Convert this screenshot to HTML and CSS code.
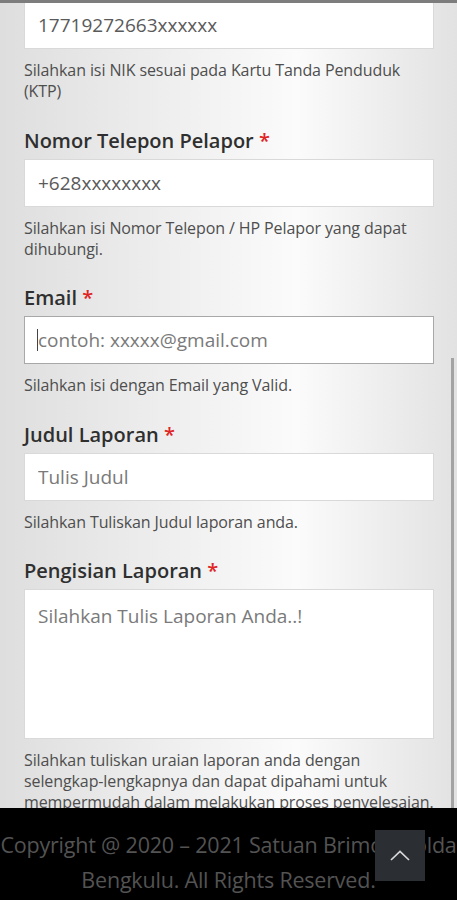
FILE: index.html
```html
<!DOCTYPE html>
<html lang="id">
<head>
    <meta charset="UTF-8">
    <meta name="viewport" content="width=device-width, initial-scale=1.0">
    <title>Pengaduan Masyarakat</title>
    <link rel="stylesheet" href="styles.css">
</head>
<body>
    <div class="top-edge"></div>
    <main class="form-wrap">
        <div class="field">
            <input class="input" type="text" value="17719272663xxxxxx">
            <p class="help">Silahkan isi NIK sesuai pada Kartu Tanda Penduduk (KTP)</p>
        </div>
        <div class="field">
            <label class="label">Nomor Telepon Pelapor <span class="req">*</span></label>
            <input class="input" type="text" value="+628xxxxxxxx">
            <p class="help">Silahkan isi Nomor Telepon / HP Pelapor yang dapat dihubungi.</p>
        </div>
        <div class="field">
            <label class="label">Email <span class="req">*</span></label>
            <div class="input-box active">
                <span class="caret"></span>
                <input class="input bare" type="email" placeholder="contoh: xxxxx@gmail.com">
            </div>
            <p class="help">Silahkan isi dengan Email yang Valid.</p>
        </div>
        <div class="field">
            <label class="label">Judul Laporan <span class="req">*</span></label>
            <input class="input" type="text" placeholder="Tulis Judul">
            <p class="help">Silahkan Tuliskan Judul laporan anda.</p>
        </div>
        <div class="field">
            <label class="label">Pengisian Laporan <span class="req">*</span></label>
            <textarea class="input textarea" placeholder="Silahkan Tulis Laporan Anda..!"></textarea>
            <p class="help">Silahkan tuliskan uraian laporan anda dengan selengkap-lengkapnya dan dapat dipahami untuk mempermudah dalam melakukan proses penyelesaian.</p>
        </div>
    </main>

    <div class="scroll-thumb"></div>

    <footer class="footer">
        <p>Copyright @ 2020 – 2021 Satuan Brimob Polda Bengkulu. All Rights Reserved.</p>
    </footer>

    <a href="#" class="to-top">
        <svg width="20" height="11" viewBox="0 0 20 11">
            <path d="M1 10 L10 1.5 L19 10" fill="none" stroke="#d8d8d8" stroke-width="1.7"/>
        </svg>
    </a>
</body>
</html>
```

FILE: styles.css
```css
*{
    margin: 0;
    padding: 0;
    box-sizing: border-box;
}
body{
    font-family: "Open Sans", "Noto Sans", sans-serif;
    background: linear-gradient(90deg, #dedede 0%, #f2f2f2 45%, #fbfbfb 65%, #e2e2e2 100%);
    height: 900px;
    overflow: hidden;
}
.top-edge{
    position: fixed;
    top: 0;
    left: 0;
    right: 0;
    height: 3px;
    background: #7d7d7d;
    z-index: 5;
}
.form-wrap{
    padding: 1px 23px 0 24px;
}
.field{
    margin-bottom: 25.5px;
}
.label{
    display: block;
    font-size: 20px;
    font-weight: 600;
    line-height: 26px;
    color: #2f2f2f;
    margin-bottom: 5px;
}
.req{
    color: #e02424;
}
.input{
    display: block;
    width: 100%;
    height: 48px;
    padding: 0 13px;
    border: 1px solid #d9d9d9;
    background: #fff;
    font-family: inherit;
    font-size: 19px;
    color: #5a5a5a;
    outline: none;
}
.input::placeholder{
    color: #7a7a7a;
}
.input-box{
    position: relative;
    height: 48px;
    border: 1px solid #a8a8a8;
    background: #fff;
}
.input.bare{
    border: none;
    height: 46px;
}
.caret{
    position: absolute;
    left: 12px;
    top: 12px;
    width: 1px;
    height: 22px;
    background: #444;
}
.textarea{
    height: 150px;
    padding: 12px 13px;
    resize: none;
    line-height: 28px;
}
.help{
    margin-top: 11px;
    font-size: 16px;
    line-height: 21px;
    color: #4e4e4e;
    letter-spacing: -0.1px;
}
.scroll-thumb{
    position: fixed;
    right: 3px;
    top: 358px;
    width: 3px;
    height: 450px;
    background: #a3a3a3;
}
.footer{
    position: fixed;
    left: 0;
    right: 0;
    bottom: 0;
    height: 92px;
    background: #000;
    padding-top: 19px;
    text-align: center;
    overflow: hidden;
}
.footer p{
    margin: 0 -10px;
    font-size: 21.5px;
    line-height: 35px;
    color: #535353;
    letter-spacing: -0.2px;
}
.to-top{
    position: fixed;
    right: 32px;
    bottom: 19px;
    width: 50px;
    height: 51px;
    background: #2b2e33;
    display: flex;
    justify-content: center;
    align-items: center;
}
```
